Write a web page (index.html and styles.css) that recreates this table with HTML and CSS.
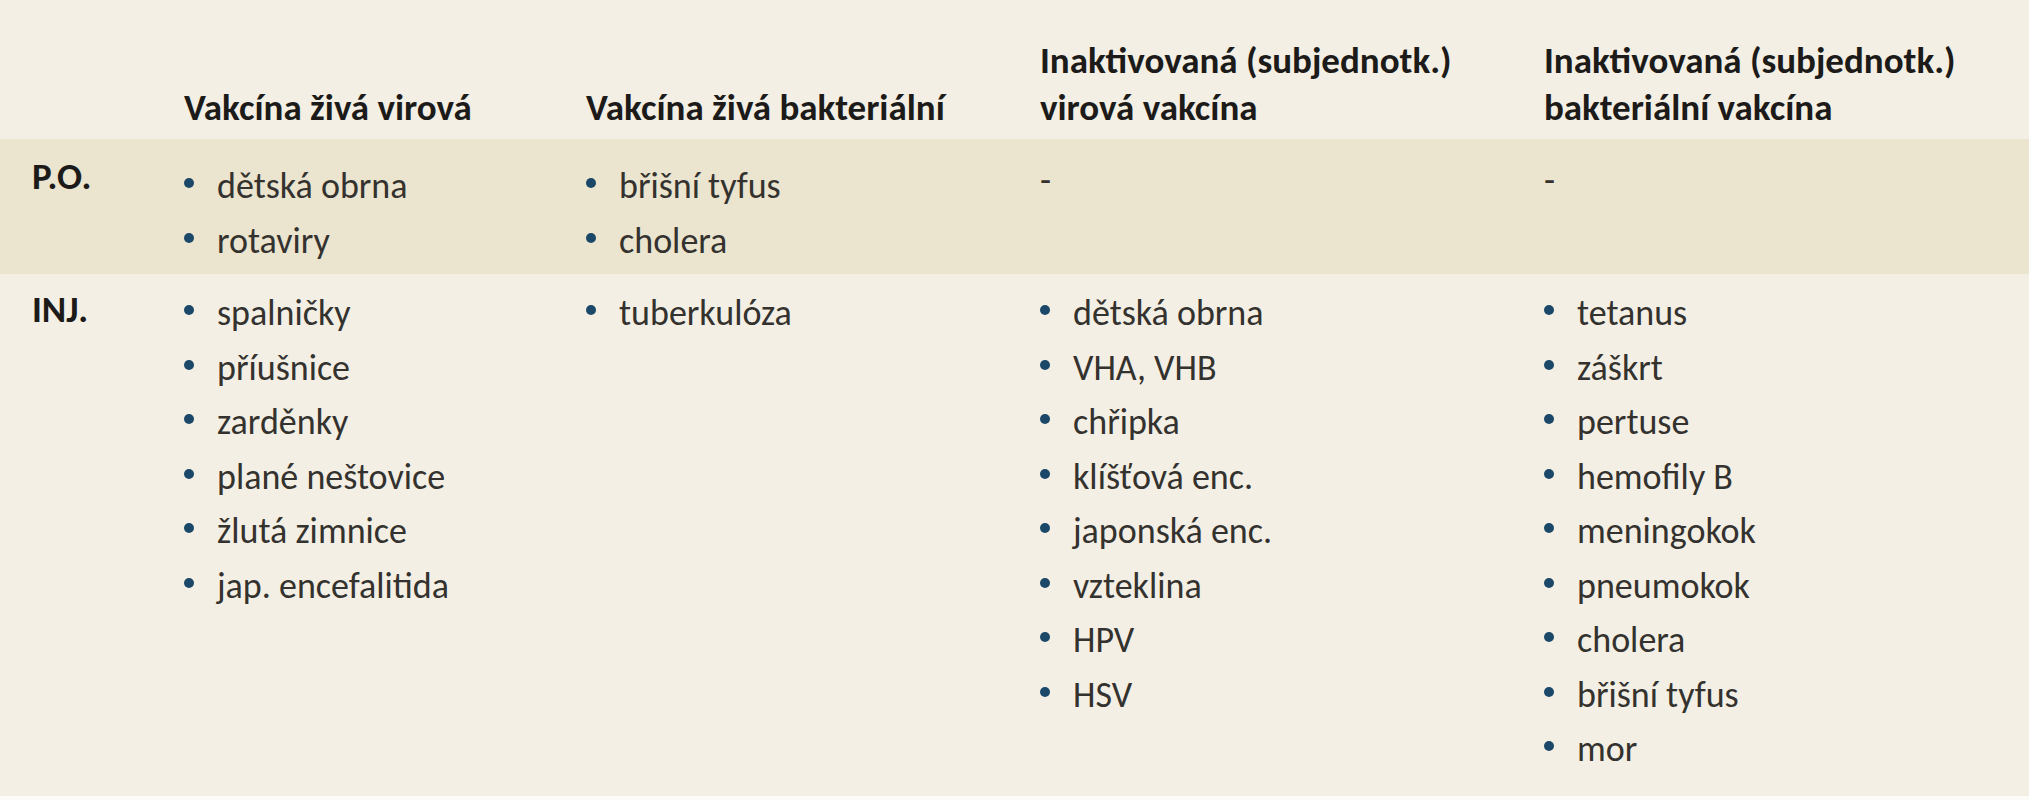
FILE: index.html
```html
<!DOCTYPE html>
<html lang="cs">
<head>
<meta charset="utf-8">
<title>Vakcíny</title>
<link rel="stylesheet" href="styles.css">
</head>
<body>
<div class="vtable">
  <div class="row head">
    <div class="cell label"></div>
    <div class="cell">Vakcína živá virová</div>
    <div class="cell">Vakcína živá bakteriální</div>
    <div class="cell">Inaktivovaná (subjednotk.)<br>virová vakcína</div>
    <div class="cell">Inaktivovaná (subjednotk.)<br>bakteriální vakcína</div>
  </div>
  <div class="row po">
    <div class="cell label">P.O.</div>
    <div class="cell"><ul><li>dětská obrna</li><li>rotaviry</li></ul></div>
    <div class="cell"><ul><li>břišní tyfus</li><li>cholera</li></ul></div>
    <div class="cell dash">-</div>
    <div class="cell dash">-</div>
  </div>
  <div class="row inj">
    <div class="cell label">INJ.</div>
    <div class="cell"><ul><li>spalničky</li><li>příušnice</li><li>zarděnky</li><li>plané neštovice</li><li>žlutá zimnice</li><li>jap. encefalitida</li></ul></div>
    <div class="cell"><ul><li>tuberkulóza</li></ul></div>
    <div class="cell"><ul><li>dětská obrna</li><li>VHA, VHB</li><li>chřipka</li><li>klíšťová enc.</li><li>japonská enc.</li><li>vzteklina</li><li>HPV</li><li>HSV</li></ul></div>
    <div class="cell"><ul><li>tetanus</li><li>záškrt</li><li>pertuse</li><li>hemofily B</li><li>meningokok</li><li>pneumokok</li><li>cholera</li><li>břišní tyfus</li><li>mor</li></ul></div>
  </div>
</div>
</body>
</html>
```

FILE: styles.css
```css
html, body {
  margin: 0;
  padding: 0;
  background: #fcfbf7;
}

body {
  font-family: Carlito, Lato, "Open Sans", sans-serif;
  color: #34322e;
}

.vtable {
  width: 2029px;
  height: 796px;
  background: #f3efe4;
}

.row {
  display: grid;
  grid-template-columns: 184px 402px 454px 504px 1fr;
}

.cell.label {
  padding-left: 32px;
  font-weight: 700;
  font-size: 37px;
  line-height: 44px;
  color: #1c1b19;
}

.head {
  height: 139px;
  box-sizing: border-box;
  padding-bottom: 8px;
  align-items: end;
  font-weight: 700;
  font-size: 37px;
  line-height: 47px;
  color: #1c1b19;
}

.po {
  background: #ebe4cf;
  height: 135px;
  box-sizing: border-box;
  padding-top: 20px;
}

.po .label {
  margin-top: -4px;
}

.inj {
  padding-top: 12px;
}

.inj .label {
  padding-top: 2px;
}

ul {
  margin: 0;
  padding: 0;
  list-style: none;
  font-size: 36px;
  line-height: 54.5px;
}

li::before {
  content: "";
  display: inline-block;
  width: 10px;
  height: 10px;
  border-radius: 50%;
  background: #1b4868;
  margin-right: 23px;
  vertical-align: 10px;
}

.dash {
  font-size: 36px;
  line-height: 54.5px;
  margin-top: -6px;
}
```
